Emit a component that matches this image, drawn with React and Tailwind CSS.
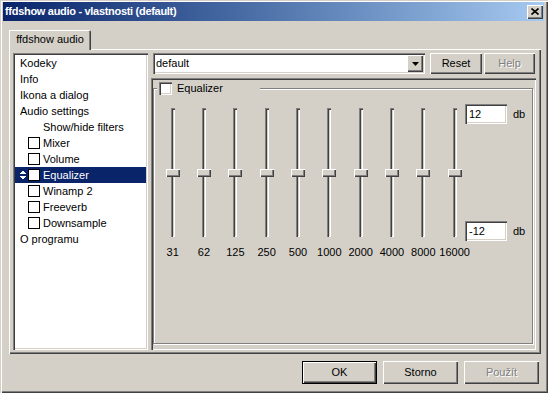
const raised = 'shadow-[inset_1px_1px_0_#fff,inset_-1px_-1px_0_#404040,inset_-2px_-2px_0_#808080]';
const sunken = 'shadow-[inset_1px_1px_0_#808080,inset_2px_2px_0_#404040,inset_-1px_-1px_0_#fff,inset_-2px_-2px_0_#d4d0c8]';

const pages = [
  { label: 'Kodeky' },
  { label: 'Info' },
  { label: 'Ikona a dialog' },
  { label: 'Audio settings' },
  { label: 'Show/hide filters', indent: true },
  { label: 'Mixer', check: true },
  { label: 'Volume', check: true },
  { label: 'Equalizer', check: true, selected: true },
  { label: 'Winamp 2', check: true },
  { label: 'Freeverb', check: true },
  { label: 'Downsample', check: true },
  { label: 'O programu' },
];

const bands = ['31', '62', '125', '250', '500', '1000', '2000', '4000', '8000', '16000'];

function Button({ children, disabled, isDefault, className = '' }) {
  return (
    <div
      className={`h-full flex items-center justify-center bg-[#d4d0c8] ${raised} ${
        isDefault ? 'border border-black' : ''
      } ${disabled ? 'text-[#808080] [text-shadow:1px_1px_0_#fff]' : ''} ${className}`}
    >
      {children}
    </div>
  );
}

function UpDown() {
  return (
    <svg width="7" height="12" viewBox="0 0 7 12" shapeRendering="crispEdges">
      <polygon points="0,5 3.5,1.5 7,5" fill="#fff" />
      <polygon points="0,7 3.5,10.5 7,7" fill="#fff" />
    </svg>
  );
}

function PageList() {
  return (
    <div className={`w-[135px] h-[297px] bg-white p-[2px] ${sunken}`}>
      {pages.map((p) => (
        <div
          key={p.label}
          className={`h-[16px] flex items-center leading-[16px] whitespace-nowrap ${
            p.selected ? 'bg-[#0a246a] text-white' : ''
          }`}
        >
          {p.check ? (
            <>
              <span className="w-[13px] pl-[4px] flex items-center">{p.selected && <UpDown />}</span>
              <span className="w-[12px] h-[12px] border border-black bg-white shrink-0" />
              <span className="ml-[3px]">{p.label}</span>
            </>
          ) : (
            <span className={p.indent ? 'pl-[28px]' : 'pl-[5px]'}>{p.label}</span>
          )}
        </div>
      ))}
    </div>
  );
}

function EditRow({ value }) {
  return (
    <div className="flex items-center">
      <div className={`w-[42px] h-[20px] bg-white pl-[4px] leading-[20px] ${sunken}`}>{value}</div>
      <span className="ml-[6px]">db</span>
    </div>
  );
}

function Equalizer() {
  return (
    <div className="relative mt-[8px] w-[380px] h-[256px] border border-[#808080] shadow-[1px_1px_0_#fff,inset_1px_1px_0_#fff] flex items-start pt-[15px] pl-[3px]">
      <div className="absolute left-[3px] top-[-7px] w-[103px] h-[13px] bg-[#d4d0c8] flex items-center pl-[2px]">
        <span className={`w-[13px] h-[13px] bg-white shrink-0 ${sunken}`} />
        <span className="ml-[5px] leading-[13px]">Equalizer</span>
      </div>
      <div className="mt-[4px] w-[308px] flex">
        {bands.map((b) => (
          <div key={b} className="w-[31.33px] shrink-0 flex flex-col items-center">
            <div className="relative w-[4px] h-[129px] bg-[#d4d0c8] shadow-[inset_1px_1px_0_#808080,inset_2px_2px_0_#404040,inset_-1px_-1px_0_#fff]">
              <div className={`absolute left-[-5px] top-[61px] w-[14px] h-[8px] bg-[#d4d0c8] ${raised}`} />
            </div>
            <div className="mt-[9px] leading-[13px] whitespace-nowrap">{b}</div>
          </div>
        ))}
      </div>
      <div className="h-[137px] flex flex-col justify-between">
        <EditRow value="12" />
        <EditRow value="-12" />
      </div>
    </div>
  );
}

export default function App() {
  return (
    <div className="w-[548px] h-[393px] overflow-hidden bg-[#d4d0c8] pt-[2px] pl-[3px] text-[11px] text-black font-['Liberation_Sans',Arial,sans-serif] shadow-[inset_1px_1px_0_#d4d0c8,inset_2px_2px_0_#fff,inset_-1px_-1px_0_#404040,inset_-2px_-2px_0_#808080] select-none">
      {/* title bar */}
      <div className="w-[541px] h-[19px] flex items-start bg-linear-to-r from-[#0a246a] to-[#a6caf0]">
        <span className="ml-[2px] leading-[19px] font-bold text-white whitespace-nowrap tracking-[-0.3px]">
          ffdshow audio - vlastnosti (default)
        </span>
        <div className={`ml-auto mt-[3px] mr-[1px] w-[16px] h-[14px] bg-[#d4d0c8] flex items-center justify-center ${raised}`}>
          <svg width="8" height="7" viewBox="0 0 8 7" className="-mt-px -ml-px">
            <path d="M0.5 0.5 L7.5 6.5 M7.5 0.5 L0.5 6.5" stroke="#000" strokeWidth="1.6" />
          </svg>
        </div>
      </div>

      {/* tabs */}
      <div className="ml-[6px] mt-[9px]">
        <div className="relative z-10 -mb-px w-[82px] h-[20px] bg-[#d4d0c8] rounded-tr-[2px] shadow-[inset_1px_1px_0_#fff,inset_-1px_0_0_#404040,inset_-2px_0_0_#808080] flex justify-center pt-[1px] leading-[16px]">
          ffdshow audio
        </div>
        <div className="w-[532px] h-[305px] flex pt-[4px] pl-[4px] shadow-[inset_1px_1px_0_#fff,inset_-1px_-1px_0_#404040,inset_-2px_-2px_0_#808080]">
          <PageList />
          <div className="ml-[3px] w-[385px] flex flex-col">
            <div className="flex h-[21px]">
              <div className={`ml-[2px] w-[272px] h-[21px] bg-white p-[2px] flex items-center ${sunken}`}>
                <span className="flex-1 pl-[1px] leading-[17px]">default</span>
                <div className={`w-[16px] h-[17px] bg-[#d4d0c8] flex items-center justify-center ${raised}`}>
                  <svg width="7" height="4" viewBox="0 0 7 4">
                    <polygon points="0,0 7,0 3.5,4" fill="#000" />
                  </svg>
                </div>
              </div>
              <Button className="ml-[5px] w-[52px]">Reset</Button>
              <Button disabled className="ml-[2px] w-[51px]">Help</Button>
            </div>
            <div className={`mt-[4px] w-[385px] h-[272px] pl-[2px] pt-[2px] ${sunken}`}>
              <Equalizer />
            </div>
          </div>
        </div>
      </div>

      {/* dialog buttons */}
      <div className="flex h-[23px] ml-[299px] mt-[7px] gap-[6px]">
        <Button isDefault className="w-[75px]">OK</Button>
        <Button className="w-[75px]">Storno</Button>
        <Button disabled className="w-[75px]">Použít</Button>
      </div>
    </div>
  );
}
